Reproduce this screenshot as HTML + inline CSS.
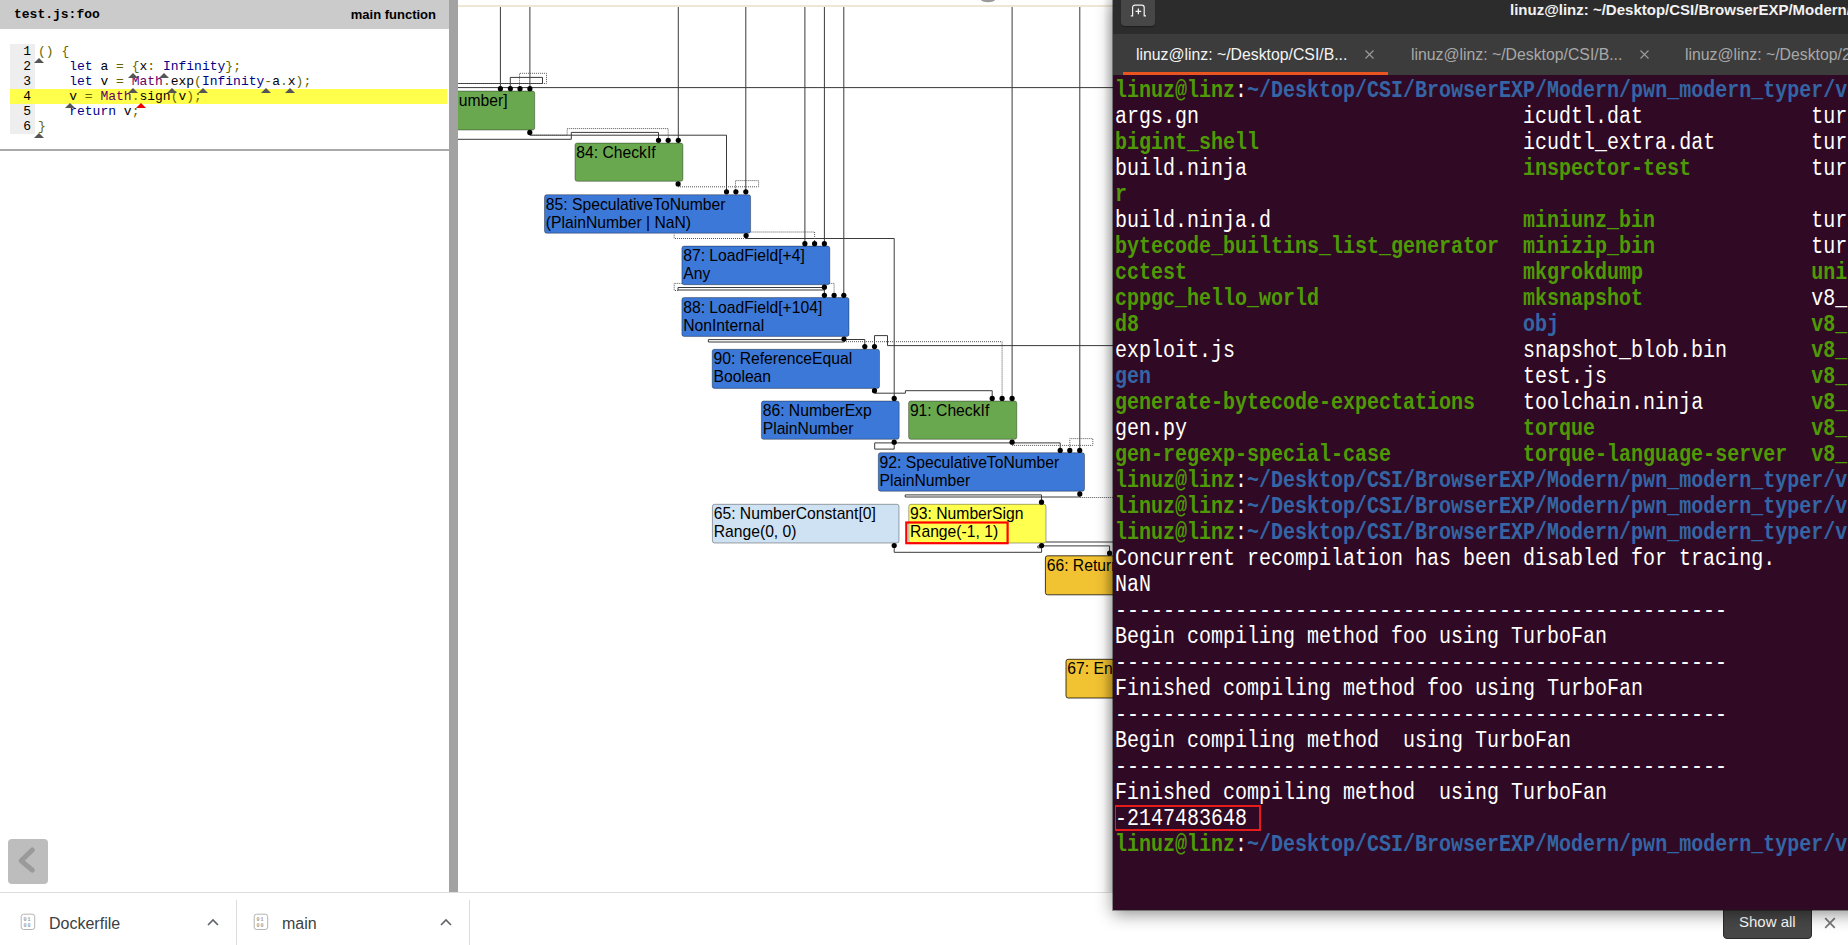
<!DOCTYPE html>
<html><head><meta charset="utf-8">
<style>
html,body{margin:0;padding:0;}
body{width:1848px;height:945px;overflow:hidden;position:relative;background:#fff;font-family:"Liberation Sans",sans-serif;}
.abs{position:absolute;}
/* left panel */
#left{left:0;top:0;width:449px;height:892px;background:#fff;}
#lhead{left:0;top:0;width:449px;height:29px;background:#cbcbcb;}
#lhead .t1{position:absolute;left:14px;top:6.2px;font:bold 13px/18px "Liberation Mono",monospace;color:#000;}
#lhead .t2{position:absolute;right:13px;top:5.6px;font:bold 13px/18px "Liberation Sans",sans-serif;color:#000;}
#gutter{left:10px;top:44px;width:25px;height:90px;background:#eeeeee;}
#hl{left:10px;top:89px;width:437px;height:15px;background:#ffff4c;}
.code{position:absolute;left:10px;top:44px;font:13px/15px "Liberation Mono",monospace;white-space:pre;color:#000;}
.code .ln{display:inline-block;width:21px;text-align:right;color:#000;margin-right:7px;}
.kwd{color:#000088}.pun{color:#666600}.typ{color:#660066}.pln{color:#000}
.tri{position:absolute;width:0;height:0;border-left:5px solid transparent;border-right:5px solid transparent;border-bottom:5px solid #555;}
#lbot{left:0;top:149px;width:449px;height:2px;background:#a9a9a9;}
#divider{left:449px;top:0;width:9px;height:892px;background:#a2a2a2;}
#back{left:8px;top:839px;width:40px;height:45px;background:#bdbdbd;border-radius:4px;}
/* graph */
#graph{left:458px;top:0;width:655px;height:892px;background:#fff;overflow:hidden;}
/* terminal */
#term{left:1113px;top:0;width:800px;height:910px;background:#300a24;box-shadow:0 4px 16px rgba(0,0,0,0.45),0 0 0 1px rgba(0,0,0,0.35);}
#ttitle{left:0;top:0;width:800px;height:34px;background:#2c2c2c;}
#ttabs{left:0;top:34px;width:800px;height:41px;background:#3c3c3c;}
.tabtxt{position:absolute;top:45.5px;font:15.8px/18px "Liberation Sans",sans-serif;white-space:pre;}
#tbody{left:2px;top:76px;width:733px;height:833px;overflow:hidden;}
.row{position:absolute;left:0;height:26px;font:23px/26px "Liberation Mono",monospace;color:#fff;white-space:pre;transform:translateY(2px) scaleX(0.8696);transform-origin:0 0;}
.g{color:#4e9a06;font-weight:bold}.b{color:#3465a4;font-weight:bold}
/* bottom bar */
#bbar{left:0;top:892px;width:1848px;height:53px;background:#fff;border-top:1px solid #dadce0;box-sizing:border-box;}
#bbar > .abs, #bbar > svg{margin-top:-892px;}
</style></head>
<body>
<div id="left" class="abs">
  <div id="lhead" class="abs"><span class="t1">test.js:foo</span><span class="t2">main function</span></div>
  <div id="gutter" class="abs"></div>
  <div id="hl" class="abs"></div>
  <div class="code"><div><span class="ln">1</span><span class="pun">()</span> <span class="pun">{</span></div><div><span class="ln">2</span>    <span class="kwd">let</span> a <span class="pun">=</span> <span class="pun">{</span>x<span class="pun">:</span> <span class="kwd">Infinity</span><span class="pun">};</span></div><div><span class="ln">3</span>    <span class="kwd">let</span> v <span class="pun">=</span> <span class="typ">Math</span><span class="pun">.</span>exp<span class="pun">(</span><span class="kwd">Infinity</span><span class="pun">-</span>a<span class="pun">.</span>x<span class="pun">);</span></div><div><span class="ln">4</span>    v <span class="pun">=</span> <span class="typ">Math</span><span class="pun">.</span>sign<span class="pun">(</span>v<span class="pun">);</span></div><div><span class="ln">5</span>    <span class="kwd">return</span> v<span class="pun">;</span></div><div><span class="ln">6</span><span class="pun">}</span></div></div>
<div class="tri" style="left:34px;top:58px;border-bottom-color:#555"></div><div class="tri" style="left:128px;top:73px;border-bottom-color:#555"></div><div class="tri" style="left:159px;top:73px;border-bottom-color:#555"></div><div class="tri" style="left:128px;top:88px;border-bottom-color:#555"></div><div class="tri" style="left:167px;top:88px;border-bottom-color:#555"></div><div class="tri" style="left:198px;top:88px;border-bottom-color:#555"></div><div class="tri" style="left:261px;top:88px;border-bottom-color:#555"></div><div class="tri" style="left:285px;top:88px;border-bottom-color:#555"></div><div class="tri" style="left:65px;top:103px;border-bottom-color:#555"></div><div class="tri" style="left:136px;top:103px;border-bottom-color:#e00"></div><div class="tri" style="left:34px;top:133px;border-bottom-color:#555"></div>
<div id="lbot" class="abs"></div>
  <div id="back" class="abs"><svg class="abs" style="left:0;top:0" width="40" height="45" viewBox="0 0 40 45"><path d="M24.3 11 L13.2 21.8 L24.3 31.2" fill="none" stroke="#9a9a9a" stroke-width="5" stroke-linecap="round" stroke-linejoin="round"/></svg></div>
</div>
<div id="divider" class="abs"></div>
<div id="graph" class="abs"><svg class="abs" style="left:0;top:0" width="655" height="892" viewBox="458 0 655 892">
<rect x="458" y="5" width="655" height="2" fill="#efe7d3"/>
<ellipse cx="988" cy="0" rx="7" ry="2.2" fill="#9a9a9a"/>
<g fill="none" stroke="#3a3a3a" stroke-width="1">
<polyline points="500.4,7.0 500.4,88.7"/>
<polyline points="529.9,7.0 529.9,88.7"/>
<polyline points="678.3,7.0 678.3,140.3"/>
<polyline points="745.8,7.0 745.8,191.8"/>
<polyline points="804.9,7.0 804.9,243.7"/>
<polyline points="824.4,7.0 824.4,243.7"/>
<polyline points="843.8,7.0 843.8,295.3"/>
<polyline points="1012.1,7.0 1012.1,398.4"/>
<polyline points="1079.8,7.0 1079.8,450.4"/>
<polyline points="458.0,87.6 1113.0,87.6"/>
<polyline points="458.0,83.5 542.5,83.5 542.5,77.4 510.3,77.4 510.3,88.7"/>
<polyline points="529.8,132.4 529.8,135.2 726.5,135.2 726.5,191.8"/>
<polyline points="458.0,139.3 571.3,139.3 571.3,132.4 658.5,132.4 658.5,140.3"/>
<polyline points="746.1,235.6 746.1,238.5 894.2,238.5 894.2,398.4"/>
<polyline points="824.4,287.2 824.4,287.5 678.0,287.5 678.0,290.0 824.4,290.0"/>
<polyline points="824.4,287.2 824.4,295.3"/>
<polyline points="844.0,339.1 844.0,339.6 708.4,339.6 708.4,342.0 844.0,342.0"/>
<polyline points="844.0,339.5 864.8,339.5 864.8,346.6"/>
<polyline points="874.5,346.6 874.5,335.6 887.5,335.6 887.5,345.6 1113.0,345.6"/>
<polyline points="874.5,390.7 874.5,393.2 905.4,393.2 905.4,390.7 992.2,390.7 992.2,398.4"/>
<polyline points="894.2,442.2 894.2,449.1 874.7,449.1 874.7,442.9 1060.2,442.9 1060.2,450.4"/>
<polyline points="1079.8,493.9 1079.8,497.0 905.2,497.0 905.2,494.9 1041.5,494.9 1041.5,502.2"/>
<polyline points="894.2,545.5 894.2,552.3 1041.6,552.3 1041.6,545.5"/>
<polyline points="1041.6,545.5 1041.6,547.8 1037.8,547.8 1037.8,545.9 1109.6,545.9 1109.6,553.2"/>
<polyline points="1046.0,542.0 1113.0,542.0"/>
</g><g fill="none" stroke="#555" stroke-width="1" stroke-dasharray="1 1">
<polyline points="519.5,88.7 519.5,73.3 546.5,73.3 546.5,83.5 458.0,83.5"/>
<polyline points="529.8,135.2 567.2,135.2 567.2,128.6 668.2,128.6 668.2,140.3"/>
<polyline points="678.0,186.8 758.6,186.8 758.6,180.6 735.5,180.6 735.5,191.8"/>
<polyline points="746.0,238.5 674.2,238.5 674.2,233.9"/>
<polyline points="750.6,232.0 814.6,232.0 814.6,243.7"/>
<polyline points="678.0,290.5 674.2,290.5 674.2,283.4 834.1,283.4 834.1,295.3"/>
<polyline points="844.0,341.7 1002.1,341.7 1002.1,398.4"/>
<polyline points="1012.1,445.4 1092.8,445.4 1092.8,438.6 1069.8,438.6 1069.8,450.4"/>
<polyline points="1079.8,497.5 1113.0,497.5"/>
</g>
<rect x="440.0" y="91.0" width="94.7" height="39.0" rx="2.2" fill="#6aa84f" stroke="rgba(0,0,0,0.35)" stroke-width="1"/>
<rect x="575.0" y="143.1" width="107.9" height="38.2" rx="2.2" fill="#6aa84f" stroke="rgba(0,0,0,0.35)" stroke-width="1"/>
<rect x="544.5" y="194.7" width="206.1" height="38.5" rx="2.2" fill="#3c78d8" stroke="rgba(0,0,0,0.35)" stroke-width="1"/>
<rect x="681.9" y="246.1" width="147.9" height="38.6" rx="2.2" fill="#3c78d8" stroke="rgba(0,0,0,0.35)" stroke-width="1"/>
<rect x="681.9" y="297.6" width="167.1" height="38.8" rx="2.2" fill="#3c78d8" stroke="rgba(0,0,0,0.35)" stroke-width="1"/>
<rect x="712.2" y="349.3" width="167.3" height="39.1" rx="2.2" fill="#3c78d8" stroke="rgba(0,0,0,0.35)" stroke-width="1"/>
<rect x="761.4" y="401.0" width="137.8" height="38.3" rx="2.2" fill="#3c78d8" stroke="rgba(0,0,0,0.35)" stroke-width="1"/>
<rect x="908.6" y="401.0" width="108.2" height="38.3" rx="2.2" fill="#6aa84f" stroke="rgba(0,0,0,0.35)" stroke-width="1"/>
<rect x="878.3" y="452.7" width="206.2" height="38.5" rx="2.2" fill="#3c78d8" stroke="rgba(0,0,0,0.35)" stroke-width="1"/>
<rect x="712.4" y="504.3" width="186.6" height="38.7" rx="2.2" fill="#cfe2f3" stroke="rgba(0,0,0,0.35)" stroke-width="1"/>
<rect x="908.8" y="504.3" width="137.2" height="38.7" rx="2.2" fill="#ffff4f" stroke="rgba(0,0,0,0.35)" stroke-width="1"/>
<rect x="1045.4" y="555.8" width="94.6" height="39.0" rx="2.2" fill="#f1c232" stroke="rgba(0,0,0,0.75)" stroke-width="1"/>
<rect x="1066.0" y="659.3" width="74.0" height="38.7" rx="2.2" fill="#f1c232" stroke="rgba(0,0,0,0.75)" stroke-width="1"/>
<g font-family="Liberation Sans" font-size="15.7" fill="#000">
<text x="507.6" y="106.0" text-anchor="end">83: ChangeTaggedToNumber]</text>
<text x="576.3" y="158.1">84: CheckIf</text>
<text x="545.8" y="209.7">85: SpeculativeToNumber</text>
<text x="545.8" y="227.7">(PlainNumber | NaN)</text>
<text x="683.2" y="261.1">87: LoadField[+4]</text>
<text x="683.2" y="279.1">Any</text>
<text x="683.2" y="312.6">88: LoadField[+104]</text>
<text x="683.2" y="330.6">NonInternal</text>
<text x="713.5" y="364.3">90: ReferenceEqual</text>
<text x="713.5" y="382.3">Boolean</text>
<text x="762.7" y="416.0">86: NumberExp</text>
<text x="762.7" y="434.0">PlainNumber</text>
<text x="909.9" y="416.0">91: CheckIf</text>
<text x="879.6" y="467.7">92: SpeculativeToNumber</text>
<text x="879.6" y="485.7">PlainNumber</text>
<text x="713.7" y="519.3">65: NumberConstant[0]</text>
<text x="713.7" y="537.3">Range(0, 0)</text>
<text x="910.1" y="519.3">93: NumberSign</text>
<text x="910.1" y="537.3">Range(-1, 1)</text>
<text x="1046.7" y="570.8">66: Return</text>
<text x="1067.3" y="674.3">67: End</text>
</g>
<rect x="906.3" y="522.5" width="101.3" height="20.7" fill="none" stroke="#f00" stroke-width="2.2"/>
<g fill="#000">
<circle cx="500.4" cy="88.7" r="2.6"/>
<circle cx="510.3" cy="88.7" r="2.6"/>
<circle cx="520.0" cy="88.7" r="2.6"/>
<circle cx="529.9" cy="88.7" r="2.6"/>
<circle cx="658.5" cy="140.3" r="2.6"/>
<circle cx="668.2" cy="140.3" r="2.6"/>
<circle cx="678.3" cy="140.3" r="2.6"/>
<circle cx="726.5" cy="191.8" r="2.6"/>
<circle cx="735.9" cy="191.8" r="2.6"/>
<circle cx="745.8" cy="191.8" r="2.6"/>
<circle cx="804.9" cy="243.7" r="2.6"/>
<circle cx="814.6" cy="243.7" r="2.6"/>
<circle cx="824.4" cy="243.7" r="2.6"/>
<circle cx="824.4" cy="295.3" r="2.6"/>
<circle cx="834.1" cy="295.3" r="2.6"/>
<circle cx="843.8" cy="295.3" r="2.6"/>
<circle cx="864.8" cy="346.6" r="2.6"/>
<circle cx="874.5" cy="346.6" r="2.6"/>
<circle cx="894.2" cy="398.4" r="2.6"/>
<circle cx="992.2" cy="398.4" r="2.6"/>
<circle cx="1002.1" cy="398.4" r="2.6"/>
<circle cx="1012.1" cy="398.4" r="2.6"/>
<circle cx="1060.2" cy="450.4" r="2.6"/>
<circle cx="1069.8" cy="450.4" r="2.6"/>
<circle cx="1079.7" cy="450.4" r="2.6"/>
<circle cx="1041.5" cy="502.2" r="2.6"/>
<circle cx="1109.6" cy="553.2" r="2.6"/>
<circle cx="529.8" cy="132.4" r="2.6"/>
<circle cx="678.1" cy="183.9" r="2.6"/>
<circle cx="746.1" cy="235.6" r="2.6"/>
<circle cx="824.4" cy="287.2" r="2.6"/>
<circle cx="844.0" cy="339.1" r="2.6"/>
<circle cx="874.5" cy="390.7" r="2.6"/>
<circle cx="894.2" cy="442.2" r="2.6"/>
<circle cx="1012.1" cy="442.2" r="2.6"/>
<circle cx="1079.8" cy="493.9" r="2.6"/>
<circle cx="894.2" cy="545.5" r="2.6"/>
<circle cx="1041.6" cy="545.5" r="2.6"/>
</g>
</svg><div class="abs" style="right:0;top:0;width:10px;height:892px;background:linear-gradient(to right,rgba(0,0,0,0),rgba(0,0,0,0.12));"></div></div>
<div id="bbar" class="abs">
<svg class="abs" style="left:20px;top:912.3px" width="16" height="18" viewBox="0 0 16 18"><rect x="1.2" y="1.2" width="13.5" height="15.3" rx="2.5" fill="none" stroke="#b4b4b4" stroke-width="1"/><text x="3.4" y="8" font-family="Liberation Mono" font-weight="bold" font-size="5.2" fill="#a0a0a0" letter-spacing="0.9">01</text><text x="3.4" y="14" font-family="Liberation Mono" font-weight="bold" font-size="5.2" fill="#a0a0a0" letter-spacing="0.9">00</text></svg>
<div class="abs" style="left:49px;top:908.5px;font:16px/28px 'Liberation Sans',sans-serif;color:#3c4043;">Dockerfile</div>
<svg class="abs" style="left:207px;top:917px" width="12" height="8" viewBox="0 0 12 8"><path d="M1 7 L6 2 L11 7" fill="none" stroke="#5f6368" stroke-width="1.6"/></svg>
<div class="abs" style="left:236px;top:899px;width:1px;height:46px;background:#dadce0;"></div>
<svg class="abs" style="left:253px;top:912.3px" width="16" height="18" viewBox="0 0 16 18"><rect x="1.2" y="1.2" width="13.5" height="15.3" rx="2.5" fill="none" stroke="#b4b4b4" stroke-width="1"/><text x="3.4" y="8" font-family="Liberation Mono" font-weight="bold" font-size="5.2" fill="#a0a0a0" letter-spacing="0.9">01</text><text x="3.4" y="14" font-family="Liberation Mono" font-weight="bold" font-size="5.2" fill="#a0a0a0" letter-spacing="0.9">00</text></svg>
<div class="abs" style="left:282px;top:908.5px;font:16px/28px 'Liberation Sans',sans-serif;color:#3c4043;">main</div>
<svg class="abs" style="left:440px;top:917px" width="12" height="8" viewBox="0 0 12 8"><path d="M1 7 L6 2 L11 7" fill="none" stroke="#5f6368" stroke-width="1.6"/></svg>
<div class="abs" style="left:469px;top:899px;width:1px;height:46px;background:#dadce0;"></div>
<div class="abs" style="left:1723px;top:900px;width:89px;height:38px;background:#474747;border:1px solid #2a2a2a;border-radius:4px;box-sizing:border-box;"></div>
<div class="abs" style="left:1739px;top:912px;font:15px/18px 'Liberation Sans',sans-serif;color:#fff;">Show all</div>
<svg class="abs" style="left:1824px;top:916px" width="12" height="12" viewBox="0 0 12 12"><path d="M1.2 1.2 L10.8 10.8 M10.8 1.2 L1.2 10.8" stroke="#777" stroke-width="1.7"/></svg>
</div>
<div id="term" class="abs">
  <div id="ttitle" class="abs">
<div class="abs" style="left:8px;top:0;width:34px;height:26px;background:#474747;border-radius:0 0 4px 4px;box-shadow:0 1px 1px rgba(0,0,0,0.35);"></div>
<svg class="abs" style="left:17px;top:4px" width="17" height="14" viewBox="0 0 17 14"><path d="M0.8 11.8 L2.6 11.8 L2.6 3.6 Q2.6 1.2 5 1.2 L11.8 1.2 Q14.2 1.2 14.2 3.6 L14.2 11.8 L16 11.8" fill="none" stroke="#f4f4f4" stroke-width="1.2"/><path d="M8.4 4.6 V10.2 M5.6 7.4 H11.2" stroke="#f4f4f4" stroke-width="1.3"/></svg>
<div class="abs" style="left:397px;top:0px;font:bold 15px/20px 'Liberation Sans',sans-serif;color:#f2f2f2;white-space:pre;">linuz@linz: ~/Desktop/CSI/BrowserEXP/Modern/pwn_modern_typer/v8</div>
</div>
  <div id="ttabs" class="abs"></div>
<div class="tabtxt" style="left:23px;color:#f4f4f4;">linuz@linz: ~/Desktop/CSI/B...</div>
<svg class="abs" style="left:252px;top:50px" width="9" height="9" viewBox="0 0 9 9"><path d="M0.5 0.5 L8.5 8.5 M8.5 0.5 L0.5 8.5" stroke="#9c9c9c" stroke-width="1.1"/></svg>
<div class="abs" style="left:10px;top:72px;width:265px;height:3px;background:#e95420;"></div>
<div class="tabtxt" style="left:298px;color:#a8a8a8;">linuz@linz: ~/Desktop/CSI/B...</div>
<svg class="abs" style="left:527px;top:50px" width="9" height="9" viewBox="0 0 9 9"><path d="M0.5 0.5 L8.5 8.5 M8.5 0.5 L0.5 8.5" stroke="#9c9c9c" stroke-width="1.1"/></svg>
<div class="tabtxt" style="left:572px;color:#a8a8a8;">linuz@linz: ~/Desktop/2...</div>
  <div id="tbody" class="abs">
<div class="row" style="top:0px"><span class="g">linuz@linz</span>:<span class="b">~/Desktop/CSI/BrowserEXP/Modern/pwn_modern_typer/v8/out/x64.release</span></div>
<div class="row" style="top:26px">args.gn                           icudtl.dat              turbo</div>
<div class="row" style="top:52px"><span class="g">bigint_shell</span>                      icudtl_extra.dat        turbo</div>
<div class="row" style="top:78px">build.ninja                       <span class="g">inspector-test</span>          turbo</div>
<div class="row" style="top:104px"><span class="g">r</span></div>
<div class="row" style="top:130px">build.ninja.d                     <span class="g">miniunz_bin</span>             turbo</div>
<div class="row" style="top:156px"><span class="g">bytecode_builtins_list_generator</span>  <span class="g">minizip_bin</span>             turbo</div>
<div class="row" style="top:182px"><span class="g">cctest</span>                            <span class="g">mkgrokdump</span>              <span class="g">unittests</span></div>
<div class="row" style="top:208px"><span class="g">cppgc_hello_world</span>                 <span class="g">mksnapshot</span>              v8_build_config.json</div>
<div class="row" style="top:234px"><span class="g">d8</span>                                <span class="b">obj</span>                     <span class="g">v8_hello_world</span></div>
<div class="row" style="top:260px">exploit.js                        snapshot_blob.bin       <span class="g">v8_sample</span></div>
<div class="row" style="top:286px"><span class="b">gen</span>                               test.js                 <span class="g">v8_shell</span></div>
<div class="row" style="top:312px"><span class="g">generate-bytecode-expectations</span>    toolchain.ninja         <span class="g">v8_simple_json_fuzzer</span></div>
<div class="row" style="top:338px">gen.py                            <span class="g">torque</span>                  <span class="g">v8_simple_parser_fuzzer</span></div>
<div class="row" style="top:364px"><span class="g">gen-regexp-special-case</span>           <span class="g">torque-language-server</span>  <span class="g">v8_simple_wasm_fuzzer</span></div>
<div class="row" style="top:390px"><span class="g">linuz@linz</span>:<span class="b">~/Desktop/CSI/BrowserEXP/Modern/pwn_modern_typer/v8/out/x64.release</span></div>
<div class="row" style="top:416px"><span class="g">linuz@linz</span>:<span class="b">~/Desktop/CSI/BrowserEXP/Modern/pwn_modern_typer/v8/out/x64.release</span></div>
<div class="row" style="top:442px"><span class="g">linuz@linz</span>:<span class="b">~/Desktop/CSI/BrowserEXP/Modern/pwn_modern_typer/v8/out/x64.release</span></div>
<div class="row" style="top:468px">Concurrent recompilation has been disabled for tracing.</div>
<div class="row" style="top:494px">NaN</div>
<div class="row" style="top:520px">---------------------------------------------------</div>
<div class="row" style="top:546px">Begin compiling method foo using TurboFan</div>
<div class="row" style="top:572px">---------------------------------------------------</div>
<div class="row" style="top:598px">Finished compiling method foo using TurboFan</div>
<div class="row" style="top:624px">---------------------------------------------------</div>
<div class="row" style="top:650px">Begin compiling method  using TurboFan</div>
<div class="row" style="top:676px">---------------------------------------------------</div>
<div class="row" style="top:702px">Finished compiling method  using TurboFan</div>
<div class="row" style="top:728px">-2147483648</div>
<div class="row" style="top:754px"><span class="g">linuz@linz</span>:<span class="b">~/Desktop/CSI/BrowserEXP/Modern/pwn_modern_typer/v8/out/x64.release</span></div>
<div class="abs" style="left:-1px;top:729px;width:147px;height:26px;border:2px solid #e41c1c;box-sizing:border-box;"></div>
</div>
</div>
</body></html>
